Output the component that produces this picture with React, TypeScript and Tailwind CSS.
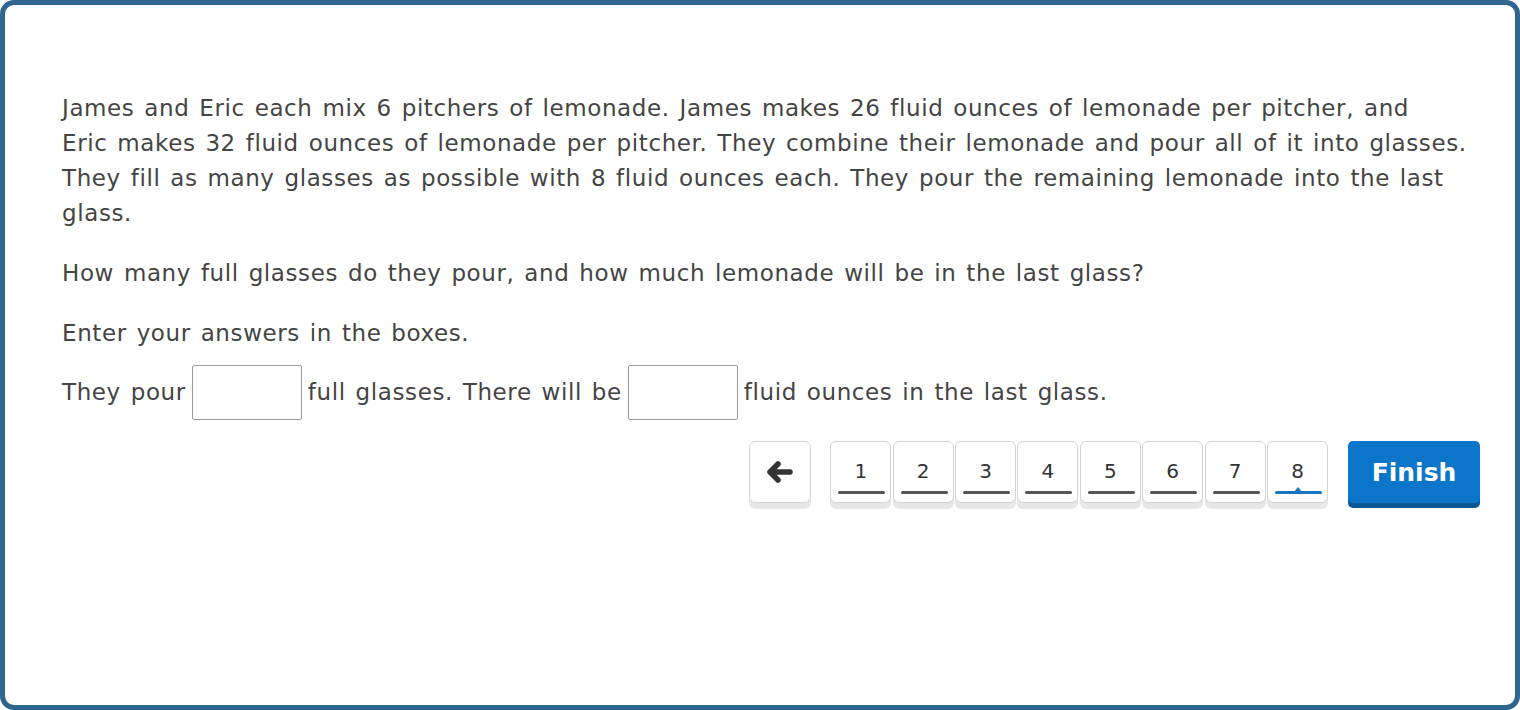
const pages = [1, 2, 3, 4, 5, 6, 7, 8];
const current = 8;

function BackArrow() {
  return (
    <svg width="26" height="22" viewBox="0 0 26 22" aria-hidden>
      <path
        d="M11 3 L3 11 L11 19 M4 11 H23"
        fill="none"
        stroke="#333"
        strokeWidth="5.5"
        strokeLinecap="round"
        strokeLinejoin="round"
      />
    </svg>
  );
}

function PageButton({ n }: { n: number }) {
  const active = n === current;
  return (
    <button
      type="button"
      className="relative flex h-[62px] w-[61px] flex-col items-center rounded-[6px] border border-[#d4d4d4] bg-white text-[20px] text-[#333] shadow-[0_6px_0_#e6e6e6]"
    >
      <span className="mt-[17px] leading-[24px]">{n}</span>
      <span
        className={
          active
            ? "absolute bottom-[8px] left-[7px] h-[3px] w-[47px] rounded-full bg-[#1a74c4]"
            : "absolute bottom-[8px] left-[7px] h-[3px] w-[47px] rounded-full bg-[#555]"
        }
      />
      {active && (
        <span className="absolute bottom-[10px] left-[26px] h-0 w-0 border-x-[4px] border-b-[5px] border-x-transparent border-b-[#1a74c4]" />
      )}
    </button>
  );
}

function AnswerBox() {
  return (
    <input
      type="text"
      className="mx-[6px] h-[55px] w-[110px] rounded-[2px] border border-[#9a9a9a] bg-white outline-none"
    />
  );
}

export default function App() {
  return (
    <div className="h-[710px] w-[1520px] bg-white font-['DejaVu_Sans',sans-serif]">
      <div className="h-full w-full rounded-[14px] border-[5px] border-[#2e6690] pl-[57px] pr-[35px] pt-[86px] text-[23px] leading-[35px] tracking-[0.6px] text-[#444] [word-spacing:2px]">
        <p className="whitespace-nowrap">
          James and Eric each mix 6 pitchers of lemonade. James makes 26 fluid
          ounces of lemonade per pitcher, and
          <br />
          Eric makes 32 fluid ounces of lemonade per pitcher. They combine their
          lemonade and pour all of it into glasses.
          <br />
          They fill as many glasses as possible with 8 fluid ounces each. They
          pour the remaining lemonade into the last
          <br />
          glass.
        </p>
        <p className="mt-[25px]">
          How many full glasses do they pour, and how much lemonade will be in
          the last glass?
        </p>
        <p className="mt-[25px]">Enter your answers in the boxes.</p>
        <div className="mt-[14px] flex items-center">
          <span>They pour</span>
          <AnswerBox />
          <span>full glasses. There will be</span>
          <AnswerBox />
          <span>fluid ounces in the last glass.</span>
        </div>
        <div className="mt-[21px] flex items-start justify-end tracking-normal [word-spacing:0px]">
          <button
            type="button"
            className="flex h-[62px] w-[62px] items-center justify-center rounded-[6px] border border-[#d4d4d4] bg-white shadow-[0_6px_0_#e6e6e6]"
          >
            <BackArrow />
          </button>
          <div className="ml-[19px] flex gap-[1.4px]">
            {pages.map((n) => (
              <PageButton key={n} n={n} />
            ))}
          </div>
          <button
            type="button"
            className="ml-[20px] h-[62px] w-[132px] rounded-[5px] bg-[#0b75c9] text-[25px] font-semibold text-white shadow-[0_5px_0_#0a5996]"
          >
            Finish
          </button>
        </div>
      </div>
    </div>
  );
}
